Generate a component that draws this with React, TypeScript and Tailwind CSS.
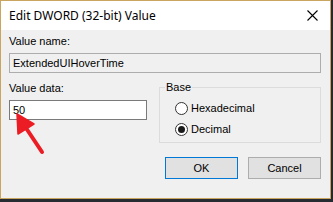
import React from "react";

const dlgFont = { fontFamily: '"Liberation Sans", Arial, sans-serif' };

const Radio = ({ label, checked }: { label: string; checked?: boolean }) => (
  <div className="flex items-center h-[13px]">
    <span className="w-[13px] h-[13px] rounded-full border border-[#333333] bg-white flex items-center justify-center">
      {checked && <span className="w-[7px] h-[7px] rounded-full bg-[#1a1a1a]" />}
    </span>
    <span className="ml-[3px] text-[11px] leading-[13px] text-black">{label}</span>
  </div>
);

const Btn = ({ label, focused }: { label: string; focused?: boolean }) => (
  <button
    type="button"
    className={
      focused
        ? "w-[73px] h-[22px] bg-[#e1e1e1] border border-[#0078d7] text-[11px] text-black"
        : "w-[73px] h-[22px] bg-[#e1e1e1] border border-[#adadad] text-[11px] text-black"
    }
  >
    {label}
  </button>
);

export default function App() {
  return (
    <div className="w-[333px] h-[202px] bg-[#262b31] overflow-hidden">
      <div
        className="relative w-[331px] h-[199px] border border-[#c9a55f] bg-[#f0f0f0] flex flex-col"
        style={dlgFont}
      >
        {/* title bar */}
        <div className="h-[29px] bg-white flex items-center justify-between pl-[8px] pr-[12px] shrink-0">
          <span
            className="text-[12px] text-black"
            style={{ fontFamily: '"Noto Sans", "Open Sans", sans-serif' }}
          >
            Edit DWORD (32-bit) Value
          </span>
          <svg width="11" height="11" viewBox="0 0 11 11">
            <path d="M0.5 0.5 L10.5 10.5 M10.5 0.5 L0.5 10.5" stroke="#000" strokeWidth="1.1" />
          </svg>
        </div>

        {/* body */}
        <div className="flex flex-col pl-[8px] pr-[9px]">
          <div className="mt-[5px] text-[11px] leading-[13px] text-black">Value name:</div>
          <div className="mt-[5px] h-[20px] border border-[#adadad] bg-[#f0f0f0] flex items-center pl-[3px] text-[11px] text-black">
            ExtendedUIHoverTime
          </div>

          <div className="mt-[9px] flex">
            <div className="w-[138px] flex flex-col">
              <div className="text-[11px] leading-[13px] text-black">Value data:</div>
              <div className="mt-[5px] h-[20px] border border-[#7a7a7a] bg-white flex items-center pl-[3px] text-[11px] text-black">
                50
              </div>
            </div>
            <fieldset className="ml-[12px] flex-1 border border-[#dcdcdc] h-[62px] -mt-[1px]">
              <legend className="ml-[5px] px-[1px] text-[11px] leading-[13px] text-black">Base</legend>
              <div className="mt-[8px] ml-[15px] flex flex-col gap-[8px]">
                <Radio label="Hexadecimal" />
                <Radio label="Decimal" checked />
              </div>
            </fieldset>
          </div>

          <div className="mt-[14px] flex justify-end gap-[10px]">
            <Btn label="OK" focused />
            <Btn label="Cancel" />
          </div>
        </div>

        {/* annotation arrow */}
        <svg
          className="absolute left-0 top-0 pointer-events-none"
          width="331"
          height="199"
          viewBox="0 0 331 199"
        >
          <path d="M41 151 L25 127" stroke="#ec1c24" strokeWidth="4" strokeLinecap="round" />
          <path d="M16 113 L17 133 L33 123 Z" fill="#ec1c24" stroke="#ec1c24" strokeWidth="1.5" strokeLinejoin="round" />
        </svg>
      </div>
    </div>
  );
}
